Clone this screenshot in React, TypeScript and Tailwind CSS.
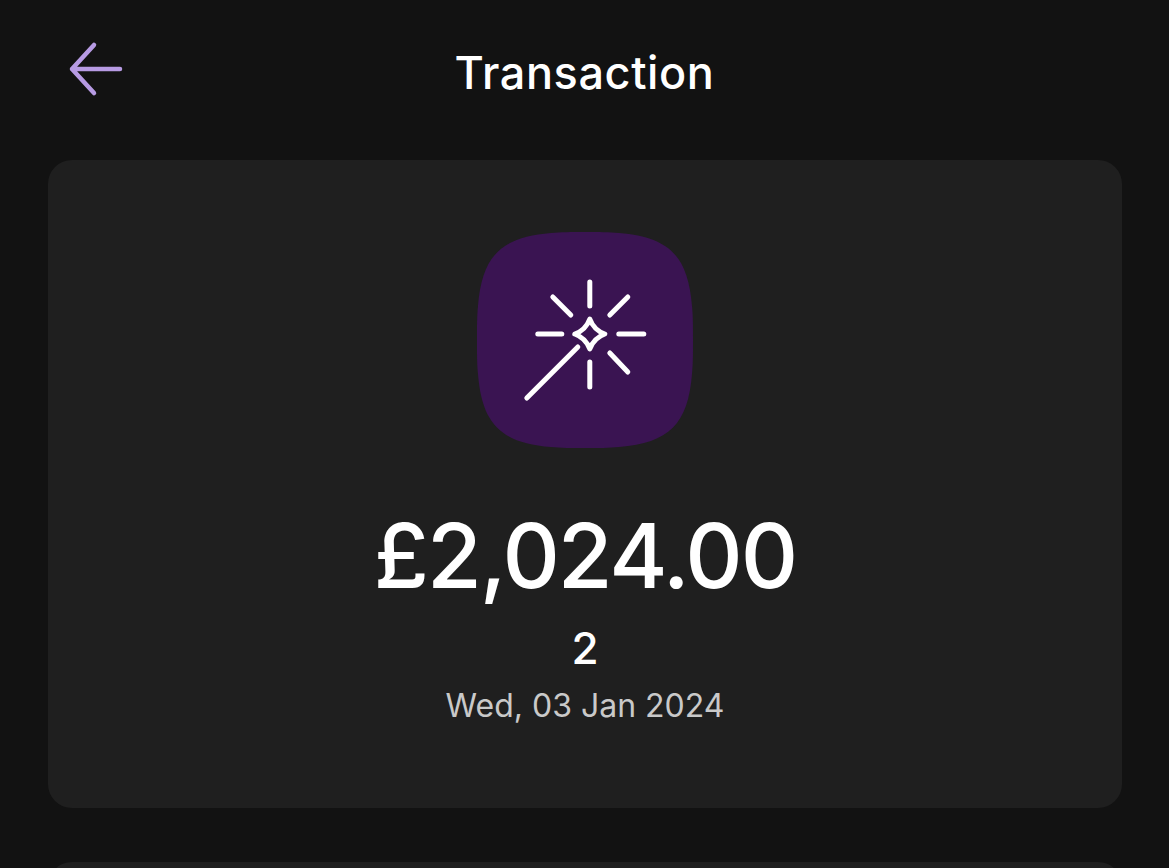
export default function App() {
  return (
    <div className="h-[868px] overflow-hidden bg-[#121212] font-['Inter','Noto_Sans',sans-serif] text-white">
      <header className="relative flex h-[160px] items-start justify-center pt-[42px]">
        <svg className="absolute left-[64px] top-[38px]" width="64" height="62" viewBox="0 0 64 62" fill="none" stroke="#b79be3" strokeWidth="4.5" strokeLinecap="round" strokeLinejoin="round">
          <path d="M30 7 L8 31 L30 55 M8 31 H56" />
        </svg>
        <h1 className="text-[45px] leading-[62px] font-medium tracking-[0.6px]">Transaction</h1>
      </header>
      <main className="flex flex-col gap-[54px] pl-[48px] pr-[47px]">
        <section className="flex h-[648px] flex-col items-center rounded-[24px] bg-[#1f1f1f] pt-[72px]">
          <svg width="216" height="216" viewBox="0 0 216 216" fill="none">
            <path d="M108 0 C122 0 132 0 142 1 C192 5 211 24 215 74 C216 84 216 94 216 108 C216 122 216 132 215 142 C211 192 192 211 142 215 C132 216 122 216 108 216 C94 216 84 216 74 215 C24 211 5 192 1 142 C0 132 0 122 0 108 C0 94 0 84 1 74 C5 24 24 5 74 1 C84 0 94 0 108 0 Z" fill="#3a1452" />
            <g transform="translate(0.8 0)" stroke="#ffffff" strokeWidth="5" strokeLinecap="round" strokeLinejoin="round">
              <path d="M112 50 V74 M112 130 V155 M60 102 H84 M141 102 H166 M75 65 L93 83 M150 65 L132 83 M132 121 L150 140 M100 115 L49 166" />
              <path d="M112 87 Q116 98 127 102 Q116 106 112 117 Q108 106 97 102 Q108 98 112 87 Z" />
            </g>
          </svg>
          <div className="mt-[53px] text-[89px] leading-[110px] font-medium tracking-[-2px]">£2,024.00</div>
          <div className="mt-[9px] text-[44px] leading-[56px] font-medium">2</div>
          <div className="mt-[6px] text-[32px] leading-[48px] text-[#c9c9c9]">Wed, 03 Jan 2024</div>
        </section>
        <section className="h-[200px] rounded-[24px] bg-[#1f1f1f]" />
      </main>
    </div>
  );
}
